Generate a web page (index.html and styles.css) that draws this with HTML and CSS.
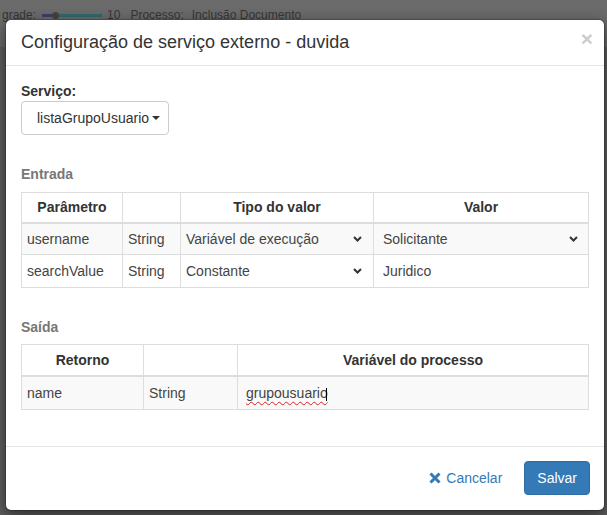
FILE: index.html
```html
<!DOCTYPE html>
<html lang="pt">
<head>
<meta charset="utf-8">
<title>Configuração de serviço externo</title>
<link rel="stylesheet" href="styles.css">
</head>
<body>
<div class="page">
  <div class="topbar">
    <span class="word">grade:</span>
    <span class="slider"><span class="fill"></span><span class="thumb"></span><span class="rest"></span></span>
    <span class="word num">10</span>
    <span class="word proc">Processo:</span>
    <span class="word">Inclusão Documento</span>
  </div>
</div>

<div class="modal">
  <div class="modal-header">
    <h4 class="modal-title">Configuração de serviço externo - duvida</h4>
    <span class="close">×</span>
  </div>

  <div class="modal-body">
    <label class="field-label">Serviço:</label>
    <button class="dropdown" type="button">listaGrupoUsuario<span class="caret"></span></button>

    <h5 class="section">Entrada</h5>
    <table class="grid grid-in">
      <thead>
        <tr class="hrow-in">
          <th class="ci1">Parâmetro</th>
          <th class="ci2"></th>
          <th class="ci3">Tipo do valor</th>
          <th class="ci4">Valor</th>
        </tr>
      </thead>
      <tbody>
        <tr class="row-a striped">
          <td>username</td>
          <td>String</td>
          <td><div class="select sel-type"><span>Variável de execução</span><svg class="chev" width="9" height="6" viewBox="0 0 9 6"><polyline points="1,1 4.5,4.5 8,1" fill="none" stroke="#333" stroke-width="2"/></svg></div></td>
          <td><div class="select sel-val"><span>Solicitante</span><svg class="chev" width="9" height="6" viewBox="0 0 9 6"><polyline points="1,1 4.5,4.5 8,1" fill="none" stroke="#333" stroke-width="2"/></svg></div></td>
        </tr>
        <tr class="row-b">
          <td>searchValue</td>
          <td>String</td>
          <td><div class="select sel-type"><span>Constante</span><svg class="chev" width="9" height="6" viewBox="0 0 9 6"><polyline points="1,1 4.5,4.5 8,1" fill="none" stroke="#333" stroke-width="2"/></svg></div></td>
          <td><div class="inp">Juridico</div></td>
        </tr>
      </tbody>
    </table>

    <h5 class="section section-out">Saída</h5>
    <table class="grid grid-out">
      <thead>
        <tr class="hrow-out">
          <th class="co1">Retorno</th>
          <th class="co2"></th>
          <th class="co3">Variável do processo</th>
        </tr>
      </thead>
      <tbody>
        <tr class="row-c striped">
          <td>name</td>
          <td>String</td>
          <td><div class="inp inp-out"><span class="typed">grupousuario</span><span class="cursor"></span></div></td>
        </tr>
      </tbody>
    </table>
  </div>

  <div class="modal-footer">
    <button class="btn-link" type="button"><svg class="x-icon" width="12" height="12" viewBox="0 0 12 12"><path d="M1.5 1.5 L10.5 10.5 M10.5 1.5 L1.5 10.5" stroke="#337ab7" stroke-width="3" fill="none"/></svg>Cancelar</button>
    <button class="btn-primary" type="button">Salvar</button>
  </div>
</div>
</body>
</html>
```

FILE: styles.css
```css
* { box-sizing: border-box; }

html, body {
  margin: 0;
  height: 100%;
}

body {
  background: #5f5f5f;
  font-family: "Liberation Sans", Arial, sans-serif;
  font-size: 14px;
  line-height: 20px;
  color: #333;
  overflow: hidden;
}

.page { height: 100%; }

/* page behind the backdrop */
.topbar {
  height: 47px;
  background: #6b6b6b;
  display: flex;
  align-items: flex-start;
  padding: 7px 0 0 2px;
  font-size: 12px;
  line-height: 16px;
  color: #363636;
}

.slider {
  display: flex;
  align-items: center;
  height: 16px;
  margin: 0 5px 0 6px;
}
.slider .fill { width: 10px; height: 3px; background: #3d3d70; }
.slider .thumb { width: 7px; height: 7px; border-radius: 50%; background: #424242; }
.slider .rest { width: 43px; height: 3px; background: #2d6a6c; }

.num { margin-right: 10px; }
.proc { margin-right: 8px; }

/* modal */
.modal {
  position: absolute;
  top: 19px;
  left: 5px;
  width: 600px;
  background: #fff;
  background-clip: padding-box;
  border: 1px solid rgba(0, 0, 0, .2);
  border-radius: 6px;
  box-shadow: 0 5px 15px rgba(0, 0, 0, .5);
}

.modal-header {
  display: flex;
  justify-content: space-between;
  align-items: flex-start;
  padding: 10px 15px;
  border-bottom: 1px solid #e5e5e5;
}

.modal-title {
  margin: 0;
  font-size: 18px;
  font-weight: normal;
  line-height: 25px;
  color: #333;
}

.close {
  font-size: 21px;
  font-weight: bold;
  line-height: 21px;
  color: #000;
  opacity: .2;
  margin: -2px -4px 0 0;
}

.modal-body {
  padding: 15px 15px 36px;
}

.field-label {
  display: block;
  font-weight: bold;
  line-height: 20px;
}

.dropdown {
  display: flex;
  align-items: center;
  width: 148px;
  height: 34px;
  padding: 0 11px 0 15px;
  border: 1px solid #ccc;
  border-radius: 4px;
  background: #fff;
  font: inherit;
  color: #333;
}

.caret {
  display: inline-block;
  width: 0;
  height: 0;
  margin-left: 3px;
  border-top: 4px solid #333;
  border-left: 4px solid transparent;
  border-right: 4px solid transparent;
}

.section {
  margin: 29px 0 8px;
  font-size: 14px;
  line-height: 20px;
  font-weight: bold;
  color: #777;
}
.section-out { margin-bottom: 7px; }

/* tables */
.grid {
  width: 568px;
  table-layout: fixed;
  border-collapse: separate;
  border-spacing: 0;
  border-top: 1px solid #ddd;
  border-left: 1px solid #ddd;
}

.grid th,
.grid td {
  padding: 0 5px;
  border-right: 1px solid #ddd;
  border-bottom: 1px solid #ddd;
  vertical-align: middle;
  text-align: left;
  font-weight: normal;
  color: #444;
  white-space: nowrap;
}

.grid th {
  border-bottom-width: 2px;
  text-align: center;
  font-weight: bold;
  color: #333;
}

.striped td { background: #f9f9f9; }

.ci1 { width: 101px; }
.ci2 { width: 58px; }
.ci3 { width: 193px; }
.ci4 { width: 215px; }

.co1 { width: 122px; }
.co2 { width: 94px; }
.co3 { width: 351px; }

.hrow-in { line-height: 29px; }
.row-a { line-height: 30px; }
.row-b { line-height: 32px; }
.hrow-out { line-height: 30px; }
.row-c { line-height: 32px; }

.select {
  display: flex;
  align-items: center;
  justify-content: space-between;
  color: #444;
}
.sel-type { padding-right: 6px; }
.sel-val { padding: 0 5px 0 4px; }

.chev { display: block; }

.inp { padding-left: 4px; color: #444; }
.inp-out { padding-left: 3px; display: flex; align-items: center; }

.typed {
  line-height: 20px;
  text-decoration: underline wavy #e02020;
  text-decoration-thickness: 1px;
  text-underline-offset: 3px;
  text-decoration-skip-ink: none;
}

.cursor {
  display: inline-block;
  width: 1px;
  height: 13px;
  margin-left: -2px;
  margin-top: 2px;
  background: #000;
}

/* footer */
.modal-footer {
  display: flex;
  justify-content: flex-end;
  align-items: center;
  padding: 14px 14px 15px;
  border-top: 1px solid #e5e5e5;
}

.btn-link {
  display: flex;
  align-items: center;
  height: 34px;
  padding: 0 12px;
  margin-right: 9px;
  border: 1px solid transparent;
  background: none;
  font: inherit;
  color: #337ab7;
}

.x-icon { margin-right: 5px; margin-top: -1px; }

.btn-primary {
  height: 34px;
  padding: 0 12px;
  border: 1px solid #2e6da4;
  border-radius: 4px;
  background: #337ab7;
  font: inherit;
  color: #fff;
}
```
